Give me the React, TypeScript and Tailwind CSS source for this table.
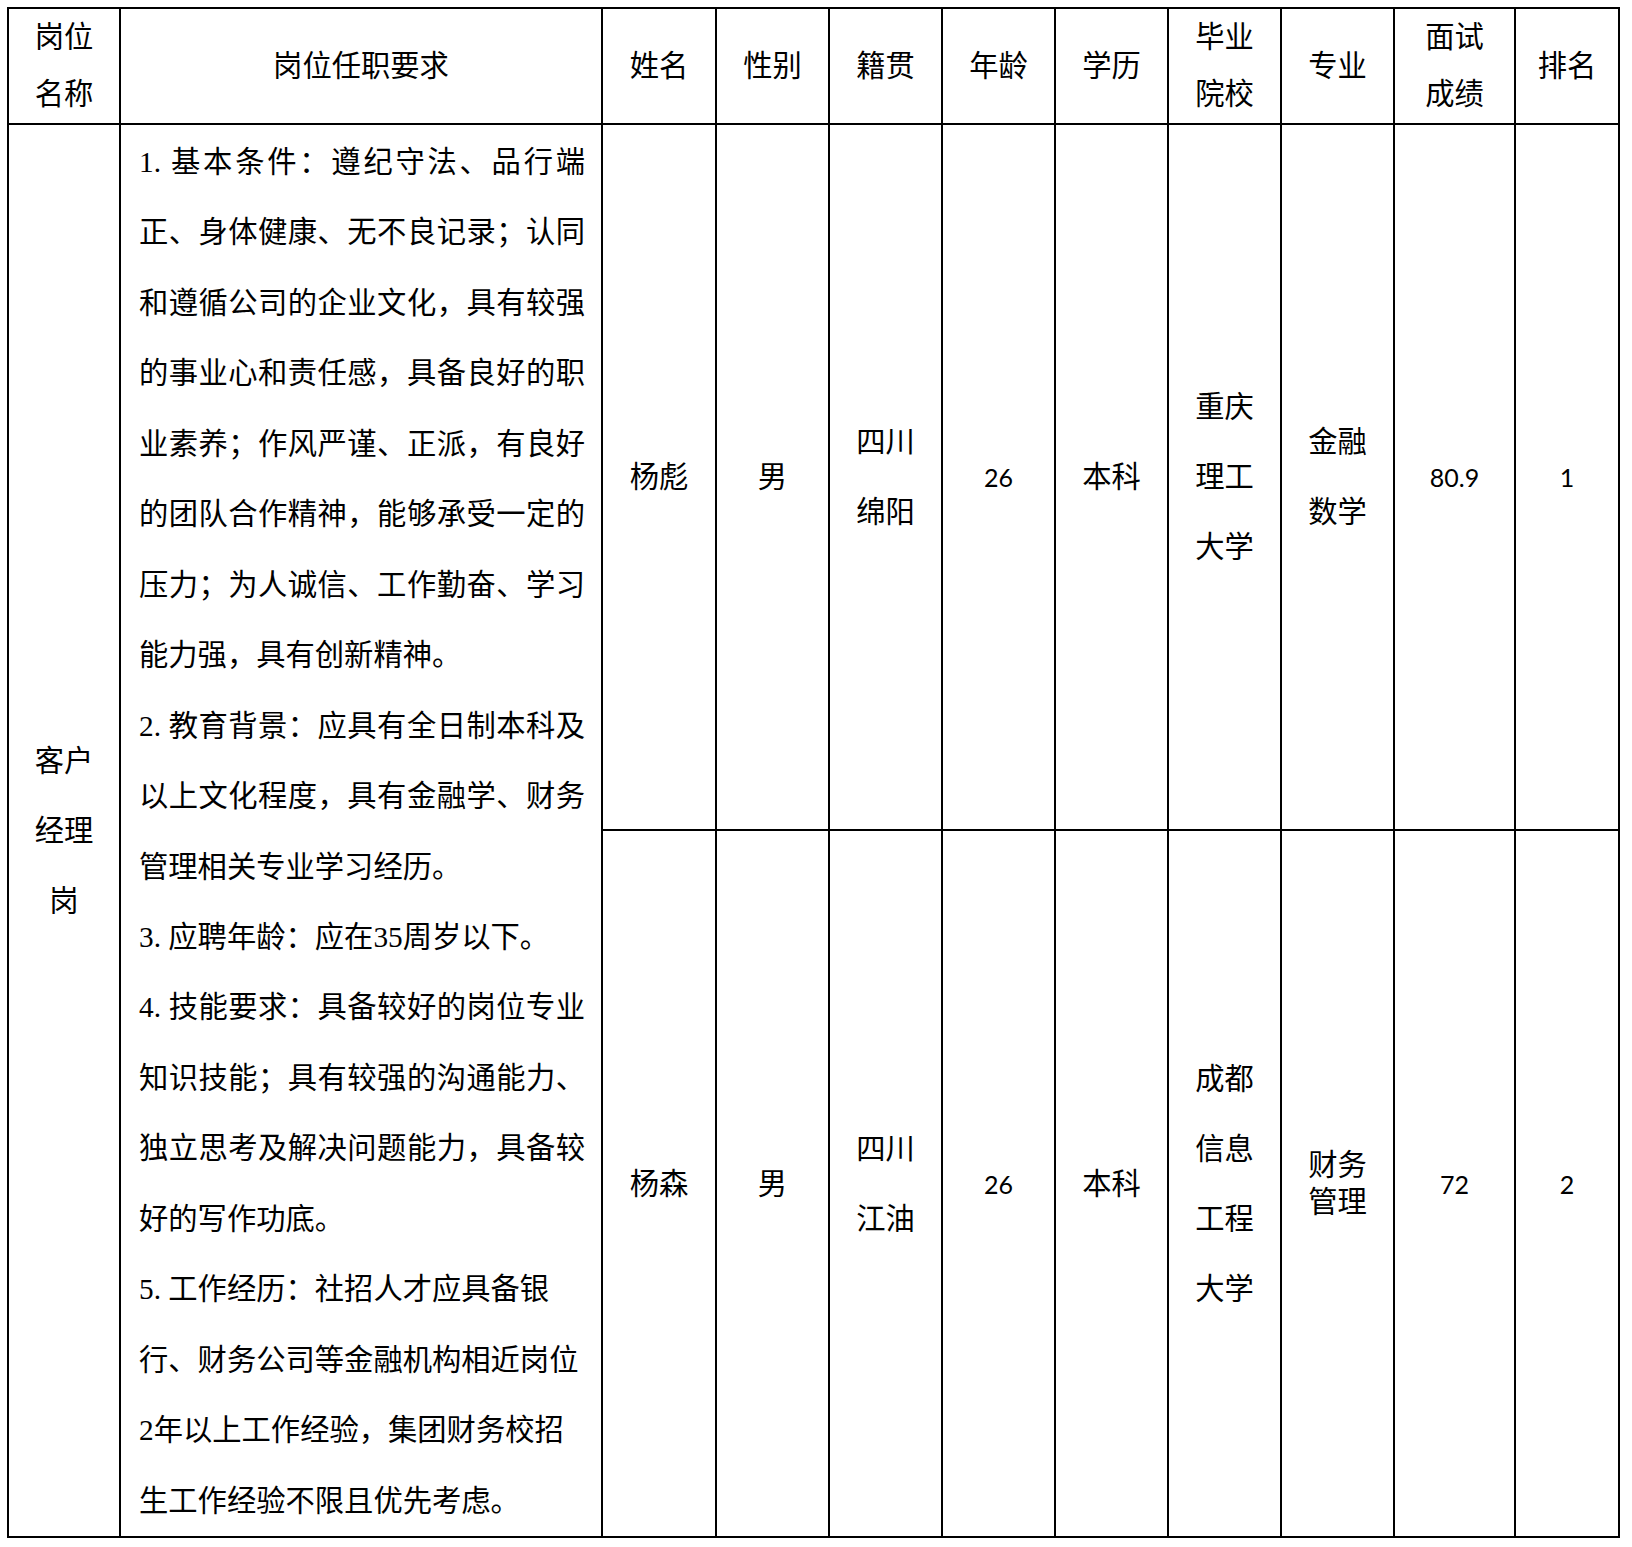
import type { ReactNode } from "react";

const CJK = "font-['Liberation_Serif','Noto_Sans_CJK_SC',serif]";
const NUM = "font-['Lato','Open_Sans',sans-serif] text-[25px]";

// 序号占一个全角宽度，和原文档的宋体半角数字一致
const No = ({ n }: { n: string }) => <span className="inline-block w-[1em]">{n}</span>;

const J = "text-justify [text-align-last:justify]";
const L = "text-left";

const requirement: { cls: string; body: ReactNode }[] = [
  { cls: J, body: <><No n="1." />基本条件：遵纪守法、品行端</> },
  { cls: J, body: "正、身体健康、无不良记录；认同" },
  { cls: J, body: "和遵循公司的企业文化，具有较强" },
  { cls: J, body: "的事业心和责任感，具备良好的职" },
  { cls: J, body: "业素养；作风严谨、正派，有良好" },
  { cls: J, body: "的团队合作精神，能够承受一定的" },
  { cls: J, body: "压力；为人诚信、工作勤奋、学习" },
  { cls: L, body: "能力强，具有创新精神。" },
  { cls: J, body: <><No n="2." />教育背景：应具有全日制本科及</> },
  { cls: J, body: "以上文化程度，具有金融学、财务" },
  { cls: L, body: "管理相关专业学习经历。" },
  { cls: L, body: <><No n="3." />应聘年龄：应在35周岁以下。</> },
  { cls: J, body: <><No n="4." />技能要求：具备较好的岗位专业</> },
  { cls: J, body: "知识技能；具有较强的沟通能力、" },
  { cls: J, body: "独立思考及解决问题能力，具备较" },
  { cls: L, body: "好的写作功底。" },
  { cls: L, body: <><No n="5." />工作经历：社招人才应具备银</> },
  { cls: L, body: "行、财务公司等金融机构相近岗位" },
  { cls: L, body: "2年以上工作经验，集团财务校招" },
  { cls: L, body: "生工作经验不限且优先考虑。" },
];

const headers: string[][] = [
  ["岗位", "名称"],
  ["岗位任职要求"],
  ["姓名"],
  ["性别"],
  ["籍贯"],
  ["年龄"],
  ["学历"],
  ["毕业", "院校"],
  ["专业"],
  ["面试", "成绩"],
  ["排名"],
];

type Cell = { lines: string[]; num?: boolean; tight?: boolean };

const candidates: Cell[][] = [
  [
    { lines: ["杨彪"] },
    { lines: ["男"] },
    { lines: ["四川", "绵阳"] },
    { lines: ["26"], num: true },
    { lines: ["本科"] },
    { lines: ["重庆", "理工", "大学"] },
    { lines: ["金融", "数学"] },
    { lines: ["80.9"], num: true },
    { lines: ["1"], num: true },
  ],
  [
    { lines: ["杨森"] },
    { lines: ["男"] },
    { lines: ["四川", "江油"] },
    { lines: ["26"], num: true },
    { lines: ["本科"] },
    { lines: ["成都", "信息", "工程", "大学"] },
    { lines: ["财务", "管理"], tight: true },
    { lines: ["72"], num: true },
    { lines: ["2"], num: true },
  ],
];

const DataCell = ({ cell }: { cell: Cell }) => (
  <div
    className={`flex flex-col items-center justify-center bg-white text-center ${
      cell.tight ? "leading-[37px]" : "leading-[70px]"
    } ${cell.num ? NUM : ""}`}
  >
    {cell.lines.map((l) => (
      <div key={l}>{l}</div>
    ))}
  </div>
);

const App = () => {
  return (
    <div className={`min-h-screen bg-white pl-[7px] pt-[7px] text-[29.3px] text-black ${CJK}`}>
      <div className="grid w-fit grid-cols-[110px_480px_112px_111px_111px_111px_111px_111px_111px_119px_102px] grid-rows-[114px_704px_705px] gap-[2px] bg-black p-[2px]">
        {/* 表头 */}
        {headers.map((h) => (
          <div
            key={h.join("")}
            className="flex flex-col items-center justify-center bg-white text-center leading-[57px]"
          >
            {h.map((l) => (
              <div key={l}>{l}</div>
            ))}
          </div>
        ))}

        {/* 岗位名称 */}
        <div className="row-span-2 flex flex-col items-center justify-center bg-white text-center leading-[70px]">
          <div>客户</div>
          <div>经理</div>
          <div>岗</div>
        </div>

        {/* 岗位任职要求 */}
        <div className="row-span-2 bg-white pl-[18px] pr-[16px] pt-[2px] leading-[70.45px]">
          {requirement.map((r, i) => (
            <div key={i} className={`whitespace-nowrap ${r.cls}`}>
              {r.body}
            </div>
          ))}
        </div>

        {/* 候选人 */}
        {candidates.map((row) => row.map((c, j) => <DataCell key={`${c.lines.join("")}-${j}`} cell={c} />))}
      </div>
    </div>
  );
};

export default App;
